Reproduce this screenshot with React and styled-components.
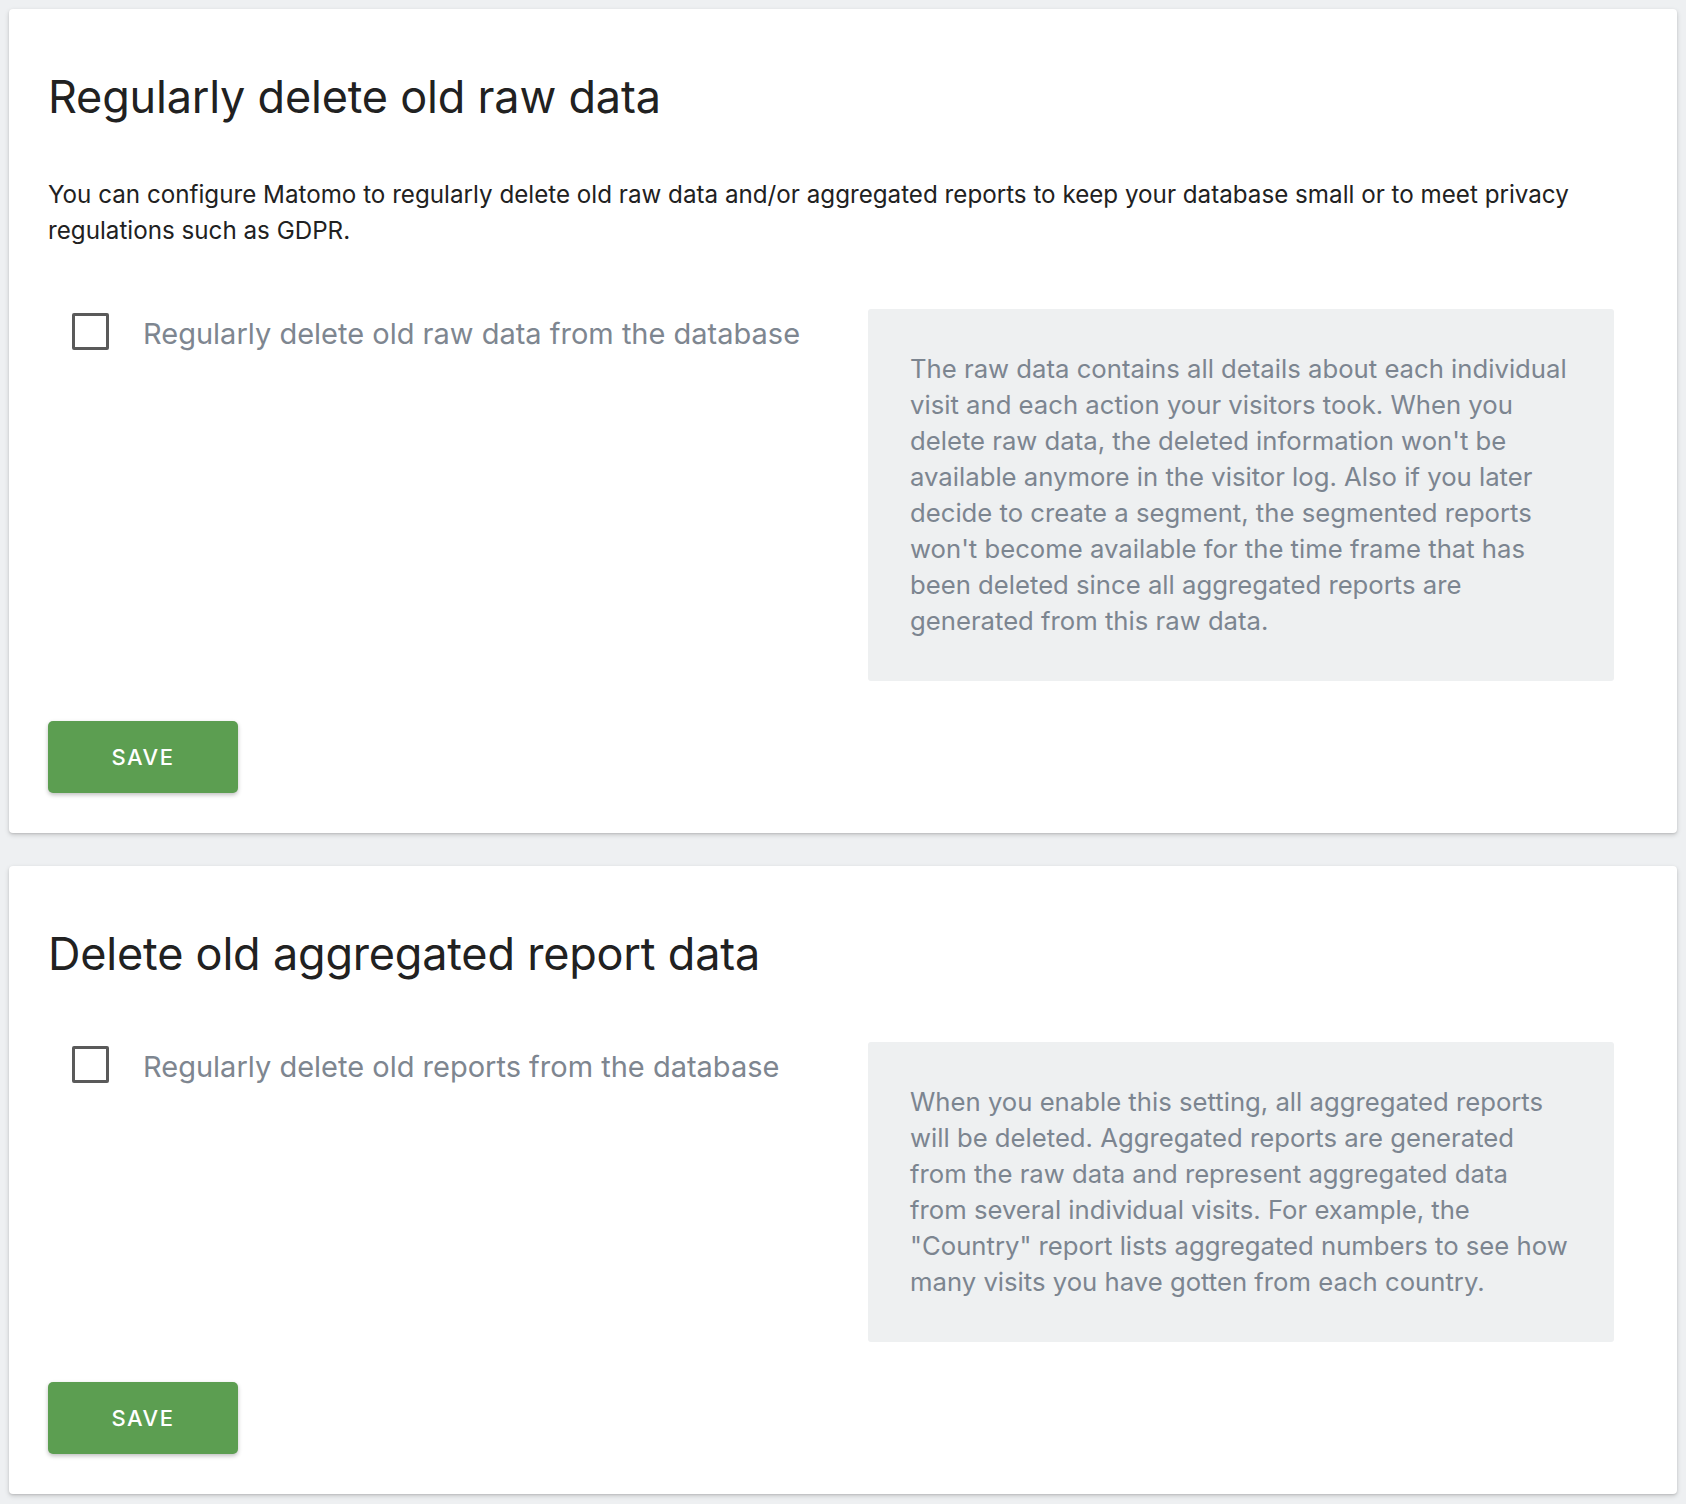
import React from "react";
import styled, { createGlobalStyle } from "styled-components";

const GlobalStyle = createGlobalStyle`
  html, body {
    margin: 0;
    padding: 0;
    background: #eef0f2;
  }
  body {
    font-family: Inter, Roboto, "Liberation Sans", sans-serif;
    -webkit-font-smoothing: antialiased;
  }
`;

const sections = [
  {
    title: "Regularly delete old raw data",
    intro:
      "You can configure Matomo to regularly delete old raw data and/or aggregated reports to keep your database small or to meet privacy regulations such as GDPR.",
    label: "Regularly delete old raw data from the database",
    help:
      "The raw data contains all details about each individual visit and each action your visitors took. When you delete raw data, the deleted information won't be available anymore in the visitor log. Also if you later decide to create a segment, the segmented reports won't become available for the time frame that has been deleted since all aggregated reports are generated from this raw data.",
  },
  {
    title: "Delete old aggregated report data",
    label: "Regularly delete old reports from the database",
    help:
      "When you enable this setting, all aggregated reports will be deleted. Aggregated reports are generated from the raw data and represent aggregated data from several individual visits. For example, the \"Country\" report lists aggregated numbers to see how many visits you have gotten from each country.",
  },
];

export default () => {
  return (
    <Page>
      <GlobalStyle />
      {sections.map(section => (
        <Card key={section.title}>
          <Title>{section.title}</Title>
          {section.intro && <Intro>{section.intro}</Intro>}
          <SettingRow>
            <CheckField>
              <Box type="checkbox" />
              <Label>{section.label}</Label>
            </CheckField>
            <Help>{section.help}</Help>
          </SettingRow>
          <SaveButton>Save</SaveButton>
        </Card>
      ))}
    </Page>
  );
};

const Page = styled.main`
  padding: 9px 9px 12px;
  display: flex;
  flex-direction: column;
  gap: 33px;
`;

const Card = styled.section`
  background: #fff;
  border-radius: 4px;
  box-shadow: 0 2px 5px rgba(0, 0, 0, 0.16), 0 1px 2px rgba(0, 0, 0, 0.1);
  padding: 60px 39px 40px;
`;

const Title = styled.h2`
  margin: 0;
  font-size: 45px;
  line-height: 56px;
  font-weight: 400;
  letter-spacing: -0.2px;
  color: #212121;
`;

const Intro = styled.p`
  margin: 52px 0 0;
  font-size: 24.2px;
  line-height: 36px;
  color: #212121;
`;

const SettingRow = styled.div`
  margin-top: 60px;
  display: grid;
  grid-template-columns: 820px 746px;
  align-items: start;
`;

const CheckField = styled.label`
  display: flex;
  align-items: flex-start;
  gap: 34px;
  padding: 4px 0 0 24px;
`;

const Box = styled.input`
  appearance: none;
  margin: 0;
  flex: none;
  width: 37px;
  height: 37px;
  border: 3.5px solid #5a5a5a;
  border-radius: 2px;
  background: #fff;
`;

const Label = styled.span`
  margin-top: 3px;
  font-size: 29px;
  line-height: 36px;
  color: #7e8690;
`;

const Help = styled.div`
  background: #eef0f1;
  border-radius: 3px;
  padding: 42px 45px 42px 42px;
  font-size: 25.7px;
  line-height: 36px;
  color: #7c8590;
`;

const SaveButton = styled.button`
  margin-top: 40px;
  width: 190px;
  height: 72px;
  border: 0;
  border-radius: 5px;
  background: #5c9e51;
  color: #fff;
  font-family: Inter, Roboto, "Liberation Sans", sans-serif;
  font-size: 22px;
  font-weight: 500;
  letter-spacing: 1.5px;
  text-transform: uppercase;
  box-shadow: 0 2px 4px rgba(0, 0, 0, 0.25);
  cursor: pointer;
`;
